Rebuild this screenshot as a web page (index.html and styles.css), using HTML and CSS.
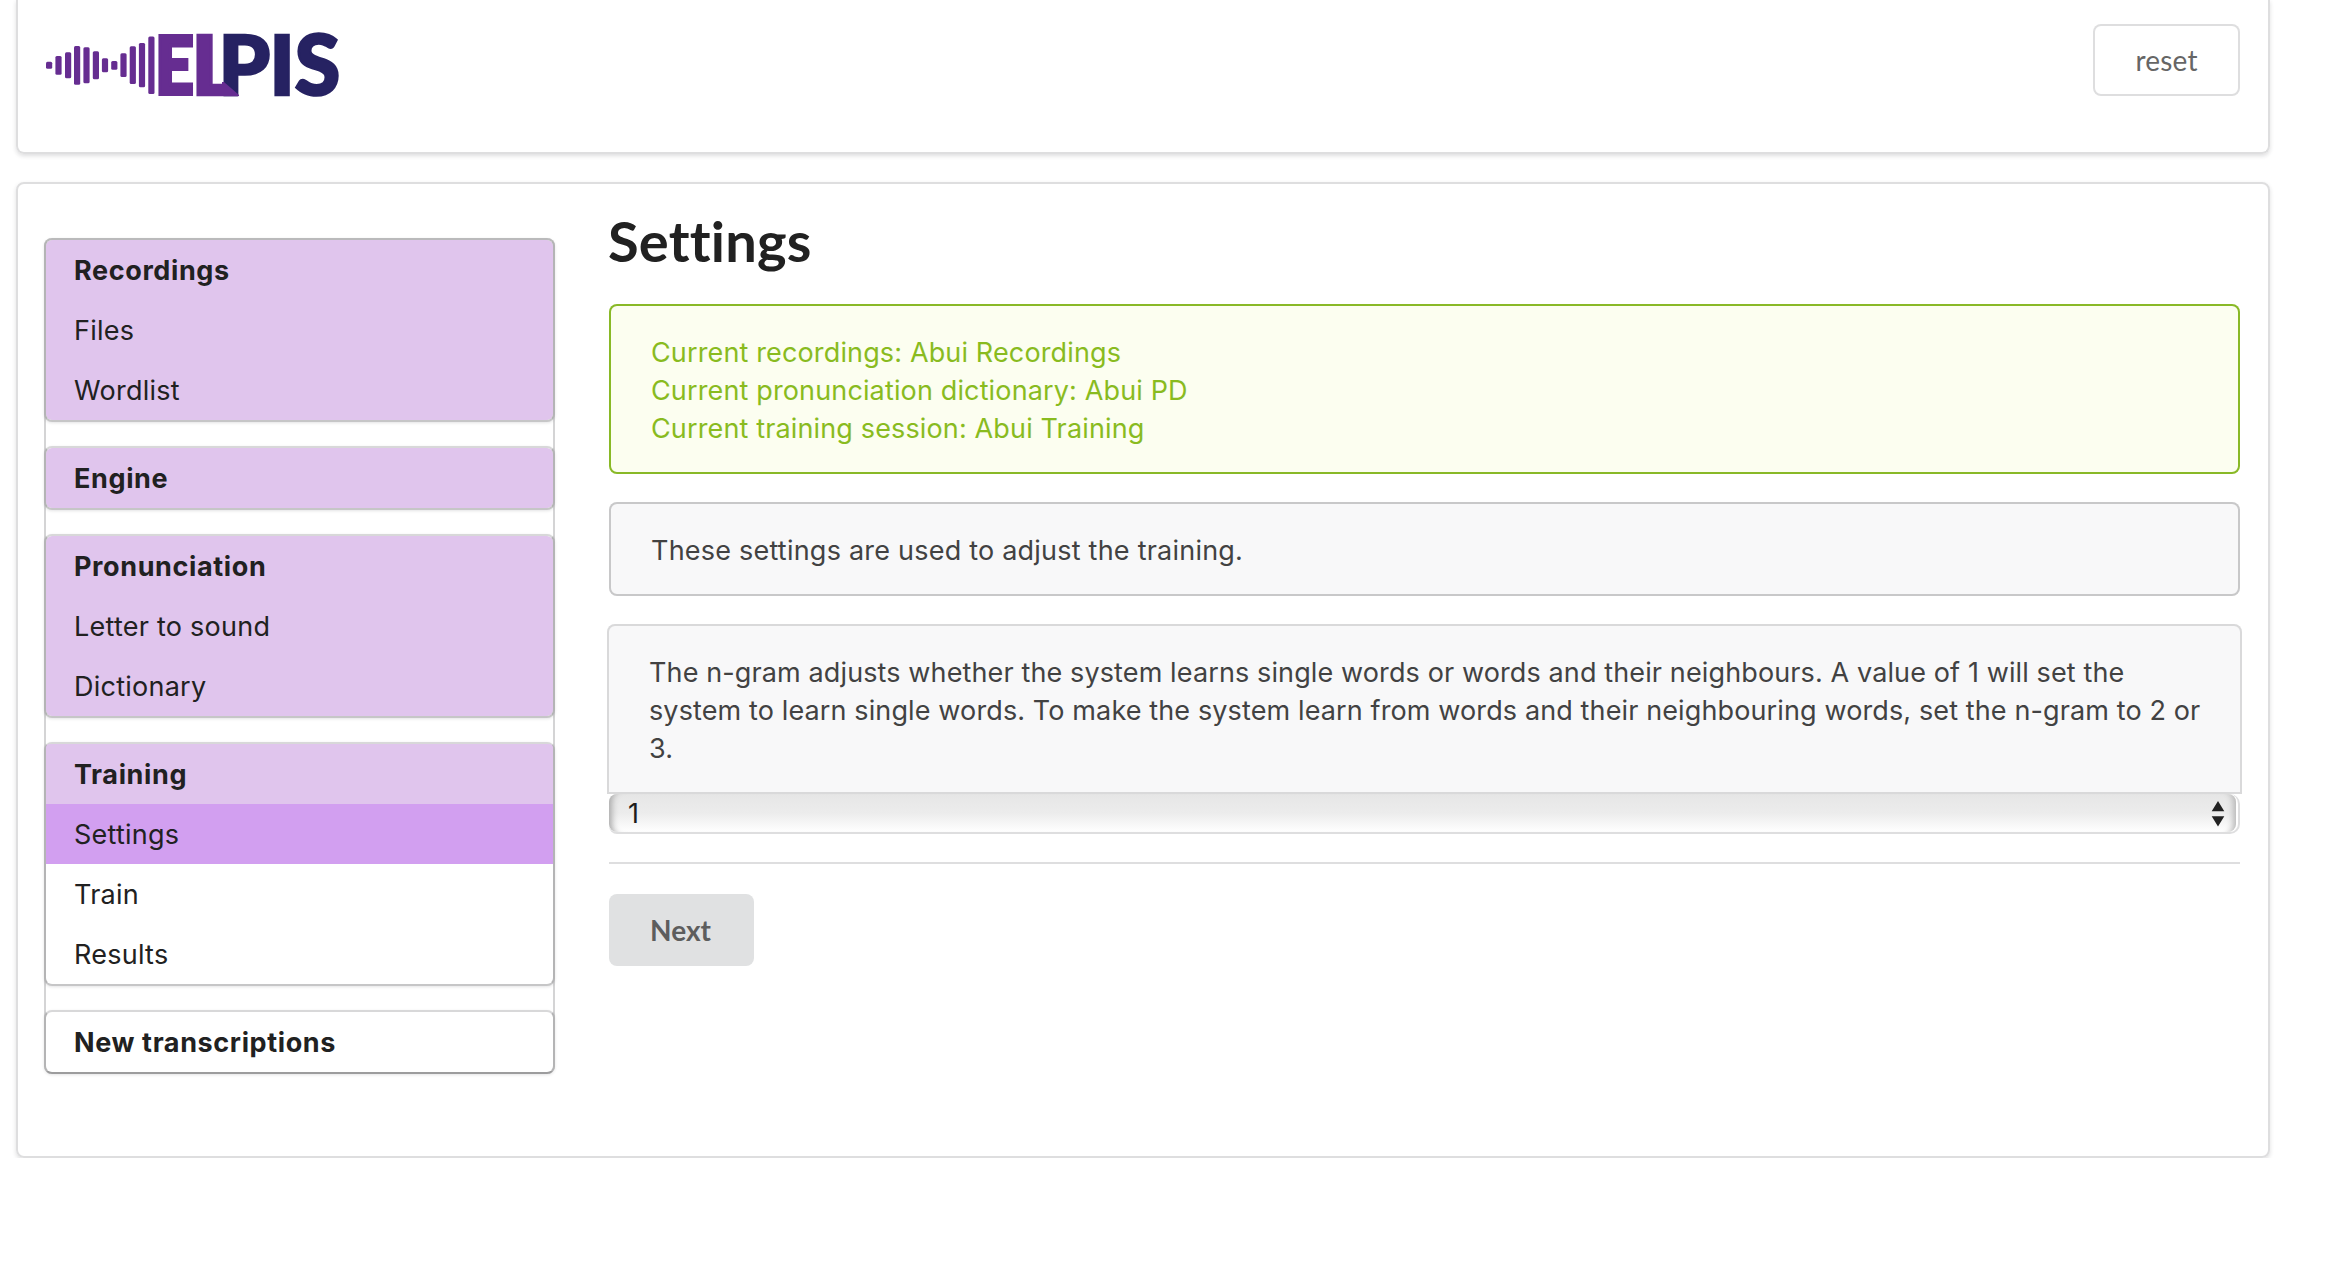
FILE: index.html
```html
<!DOCTYPE html>
<html lang="en">
<head>
<meta charset="utf-8">
<title>Elpis</title>
<link rel="stylesheet" href="styles.css">
</head>
<body>
<header class="segment header">
  <svg class="logo" width="304" height="116" viewBox="42 4 304 116" role="img" aria-label="Elpis">
    <g fill="#662d91">
      <rect x="46" y="61.7" width="6.2" height="7" rx="1.5"/>
      <rect x="55.4" y="56" width="6.2" height="18.7" rx="1.5"/>
      <rect x="65" y="52.3" width="6.2" height="26" rx="1.5"/>
      <rect x="74" y="46" width="6.2" height="38.7" rx="1.5"/>
      <rect x="83.4" y="47.3" width="6.2" height="36" rx="1.5"/>
      <rect x="92.8" y="51.3" width="6.2" height="28" rx="1.5"/>
      <rect x="101.9" y="58.3" width="6.2" height="14" rx="1.5"/>
      <rect x="111.2" y="61" width="6.2" height="8.7" rx="1.5"/>
      <rect x="120.4" y="53.3" width="6.2" height="23.7" rx="1.5"/>
      <rect x="129.7" y="46.3" width="6.2" height="37.7" rx="1.5"/>
      <rect x="138.9" y="43" width="6.2" height="44.3" rx="1.5"/>
      <rect x="148.3" y="36.6" width="6.2" height="57.4" rx="1.5"/>
    </g>
    <g class="wordmark">
      <text class="purple heavy" transform="translate(154.9 94.1) scale(.84 1)">E</text>
      <text class="purple" transform="translate(191 94.9) scale(1.09 1)">L</text>
      <text class="navy" transform="translate(218.4 94.9)">P</text>
      <text class="navy" transform="translate(269.3 94.9) scale(1.03 1)">I</text>
      <text class="navy" transform="translate(294.7 95.4) scale(1 1.02)">S</text>
    </g>
    <polygon points="222,82 224,82 239,95 239,96.1 222,96.1" fill="#662d91"/>
  </svg>
  <button class="button reset">reset</button>
</header>
<main class="segment main">
  <nav class="menu">
    <div class="group done"><b>Recordings</b><a>Files</a><a>Wordlist</a></div>
    <div class="group done"><b>Engine</b></div>
    <div class="group done"><b>Pronunciation</b><a>Letter to sound</a><a>Dictionary</a></div>
    <div class="group"><b class="reached">Training</b><a class="active">Settings</a><a>Train</a><a>Results</a></div>
    <div class="group last"><b>New transcriptions</b></div>
  </nav>
  <section class="content">
    <h1>Settings</h1>
    <div class="message success">
      <p>Current recordings: Abui Recordings</p>
      <p>Current pronunciation dictionary: Abui PD</p>
      <p>Current training session: Abui Training</p>
    </div>
    <div class="message info">These settings are used to adjust the training.</div>
    <div class="message attached">The n-gram adjusts whether the system learns single words or words and their neighbours. A value of 1 will set the system to learn single words. To make the system learn from words and their neighbouring words, set the n-gram to 2 or 3.</div>
    <div class="select">
      <div class="select-face">
        <span>1</span>
        <svg width="14" height="26" viewBox="0 0 14 26"><path d="M7 0 13.3 10.3H.7zM7 25.6 13.3 15.3H.7z" fill="#222"/></svg>
      </div>
    </div>
    <hr>
    <button class="button next">Next</button>
  </section>
</main>
</body>
</html>
```
FILE: styles.css
```css
* { box-sizing: border-box; }

body {
  margin: 0;
  background: #fff;
  color: #212121;
  font-family: Inter, "Liberation Sans", sans-serif;
  font-size: 27px;
  line-height: 38px;
}

.segment {
  width: 2254px;
  margin-left: 16px;
  display: flex;
  border: 2px solid #dededf;
  border-radius: 8px;
  box-shadow: 0 2px 4px rgba(34, 36, 38, .15);
}

.header {
  height: 154px;
  justify-content: space-between;
  padding: 24px 28px 0 24px;
  border-top: 0;
  border-radius: 0 0 8px 8px;
}

.logo { margin-top: -20px; }

.wordmark {
  font: 900 82.4px Lato, sans-serif;
  stroke-width: 2.5px;
}
.purple { fill: #662d91; stroke: #662d91; }
.navy { fill: #262262; stroke: #262262; }
.heavy { font-size: 80.5px; stroke-width: 4px; }

.button {
  height: 72px;
  padding: 0;
  border: 0;
  border-radius: 8px;
  font-family: Lato, sans-serif;
  font-size: 28px;
}
.reset {
  width: 147px;
  background: #fff;
  color: #666;
  letter-spacing: .2px;
  box-shadow: inset 0 0 0 2px #dededf;
}
.next {
  width: 145px;
  padding-right: 2px;
  background: #e0e1e2;
  color: #5d5d5d;
  font-weight: 700;
}

.main {
  height: 976px;
  margin-top: 28px;
  padding: 0 28px 0 26px;
  gap: 54px;
}

.menu {
  display: flex;
  flex-direction: column;
  gap: 24px;
  width: 511px;
  margin-top: 54px;
  align-self: flex-start;
  border: solid #d4d4d5;
  border-width: 0 2px;
  border-radius: 8px;
  letter-spacing: .25px;
}
.group {
  margin: 0 -2px;
  border: 2px solid #b4b4b5;
  border-top-color: #d8d8d9;
  border-bottom-color: #c6c6c7;
  border-radius: 8px;
  box-shadow: 0 1px 3px rgba(34, 36, 38, .12);
  background: #fff;
}
.group:first-child { border-top-color: #bababb; }
.group b, .group a {
  display: block;
  height: 60px;
  padding: 1px 0 0 28px;
  line-height: 60px;
}
.group b { letter-spacing: .62px; }
.done { background: #e0c5ed; background-clip: padding-box; }
.reached { background: #e0c5ed; border-radius: 4px 4px 0 0; }
.active { background: #d29ff0; color: #212121; }
.last { border-bottom-color: #9c9c9d; }

.content { flex: 1; padding-top: 23px; }

h1 {
  margin: 0 0 30px -1px;
  font: 700 56px/67px Lato, sans-serif;
  letter-spacing: .2px;
}

.message {
  margin-bottom: 28px;
  padding: 30px 42px 26px;
  border-radius: 8px;
  background: #f8f8f9;
  color: #424242;
  letter-spacing: .22px;
  box-shadow: inset 0 0 0 2px #c8c8c9;
}
.message p { margin: 0; }
.success {
  background: #fcfef0;
  color: #89bb1f;
  letter-spacing: .14px;
  box-shadow: inset 0 0 0 2px #89b927;
}
.attached {
  margin: 0 -2px;
  padding-right: 36px;
  border-radius: 8px 8px 0 0;
  letter-spacing: .12px;
  box-shadow: inset 0 0 0 2px #d9d9da;
}

.select {
  height: 40px;
  padding-right: 2px;
  border: 2px solid #dededf;
  border-width: 0 2px 2px 0;
  border-radius: 8px 10px 10px 8px;
}
.select-face {
  display: flex;
  justify-content: space-between;
  align-items: center;
  height: 38px;
  padding: 1px 11px 0 19px;
  border-radius: 8px;
  background: linear-gradient(#e6e6e6, #ececec 50%, #fff);
  box-shadow: inset 9px 0 6px -6px #aaa, inset -9px 0 6px -6px #b8b8b8;
}
.select-face span { color: #1c1c1c; }

hr {
  height: 2px;
  margin: 28px 0 30px;
  border: 0;
  background: #dededf;
}
```
